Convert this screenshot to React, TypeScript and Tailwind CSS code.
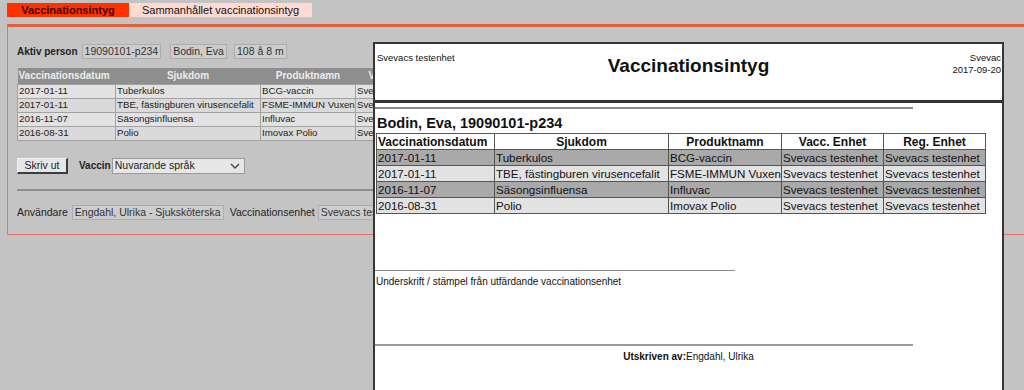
import React from "react";

type Row = { date: string; disease: string; product: string; unit: string };

const rows: Row[] = [
  { date: "2017-01-11", disease: "Tuberkulos", product: "BCG-vaccin", unit: "Svevacs testenhet" },
  { date: "2017-01-11", disease: "TBE, fästingburen virusencefalit", product: "FSME-IMMUN Vuxen", unit: "Svevacs testenhet" },
  { date: "2016-11-07", disease: "Säsongsinfluensa", product: "Influvac", unit: "Svevacs testenhet" },
  { date: "2016-08-31", disease: "Polio", product: "Imovax Polio", unit: "Svevacs testenhet" },
];

const font = { fontFamily: '"Liberation Sans", Arial, sans-serif' };

function InfoBox({ children, className = "" }: { children: React.ReactNode; className?: string }) {
  return (
    <span
      className={`flex h-[15px] shrink-0 items-center border border-[#adadad] bg-[#cdcdcd] px-[2px] text-[10.5px] leading-none text-[#333] whitespace-nowrap ${className}`}
    >
      {children}
    </span>
  );
}

function LeftTable() {
  const td = "overflow-hidden whitespace-nowrap border border-[#a2a2a2] px-[1px] leading-[12px]";
  return (
    <table className="table-fixed border-collapse text-[9.7px] text-[#222]" style={{ width: 438 }}>
      <colgroup>
        <col style={{ width: 98 }} />
        <col style={{ width: 145 }} />
        <col style={{ width: 95 }} />
        <col style={{ width: 100 }} />
      </colgroup>
      <thead>
        <tr className="h-[16px] bg-[#8e8e8e] text-[10px] font-bold text-[#ededed]">
          <th className="px-[1px] text-left leading-[14px]">Vaccinationsdatum</th>
          <th className="text-center leading-[14px]">Sjukdom</th>
          <th className="text-center leading-[14px]">Produktnamn</th>
          <th className="whitespace-nowrap pl-[13px] text-left leading-[14px]">Vacc. Enhet</th>
        </tr>
      </thead>
      <tbody>
        {rows.map((r, i) => (
          <tr key={i} className={`h-[14px] ${i % 2 === 0 ? "bg-[#e2e2e2]" : "bg-[#dadada]"}`}>
            <td className={td}>{r.date}</td>
            <td className={td}>{r.disease}</td>
            <td className={td}>{r.product}</td>
            <td className={td}>{r.unit}</td>
          </tr>
        ))}
      </tbody>
    </table>
  );
}

function CertTable() {
  const td = "overflow-hidden whitespace-nowrap border border-[#555] px-[1px] text-[11.6px] leading-[14px]";
  return (
    <table className="table-fixed border-collapse border border-[#8a8a8a] text-[12px] text-[#111]" style={{ width: 609 }}>
      <colgroup>
        <col style={{ width: 118 }} />
        <col style={{ width: 174 }} />
        <col style={{ width: 113 }} />
        <col style={{ width: 102 }} />
        <col style={{ width: 102 }} />
      </colgroup>
      <thead>
        <tr className="h-[16px] bg-white font-bold">
          <th className="border border-[#555] px-[1px] text-left leading-[14px]">Vaccinationsdatum</th>
          <th className="border border-[#555] text-center leading-[14px]">Sjukdom</th>
          <th className="border border-[#555] text-center leading-[14px]">Produktnamn</th>
          <th className="border border-[#555] text-center leading-[14px]">Vacc. Enhet</th>
          <th className="border border-[#555] text-center leading-[14px]">Reg. Enhet</th>
        </tr>
      </thead>
      <tbody>
        {rows.map((r, i) => (
          <tr key={i} className={`h-[16px] ${i % 2 === 0 ? "bg-[#a9a9a9]" : "bg-[#e2e2e2]"}`}>
            <td className={td}>{r.date}</td>
            <td className={td}>{r.disease}</td>
            <td className={td}>{r.product}</td>
            <td className={td}>{r.unit}</td>
            <td className={td}>{r.unit}</td>
          </tr>
        ))}
      </tbody>
    </table>
  );
}

function CertificatePreview() {
  return (
    <div className="absolute left-[373px] top-[42px] h-[360px] w-[631px] border-2 border-[#363636] bg-white text-[#111]">
      <div className="grid h-[56px] grid-cols-[1fr_auto_1fr]">
        <div className="pl-[2px] pt-[8px] text-[9.5px] leading-[12px]">Svevacs testenhet</div>
        <div className="pt-[11px] text-[19px] font-bold leading-[22px]">Vaccinationsintyg</div>
        <div className="flex flex-col items-end pr-[1px] pt-[8px] text-[9.5px] leading-[12px]">
          <span>Svevac</span>
          <span>2017-09-20</span>
        </div>
      </div>
      <div className="h-[3px] bg-[#333]" />
      <div className="mt-[4px] h-[2px] w-[538px] bg-[#8a8a8a]" />
      <div className="mt-[6px] pl-[2px] text-[14.5px] font-bold leading-[16px]">Bodin, Eva, 19090101-p234</div>
      <div className="mt-[2px] pl-[1px]">
        <CertTable />
      </div>
      <div className="mt-[56px] h-[1px] w-[360px] bg-[#8a8a8a]" />
      <div className="mt-[5px] pl-[1px] text-[10px] leading-[12px]">Underskrift / stämpel från utfärdande vaccinationsenhet</div>
      <div className="mt-[56px] h-[2px] w-[538px] bg-[#9a9a9a]" />
      <div className="mt-[5px] text-center text-[10px] leading-[12px]">
        <span className="font-bold">Utskriven av:</span>Engdahl, Ulrika
      </div>
    </div>
  );
}

export default function App() {
  return (
    <div className="relative h-[390px] w-[1024px] overflow-hidden bg-[#c3c3c3] text-[10px] leading-none" style={font}>
      <div className="flex pl-[7px] pt-[3px]">
        <div className="flex h-[14px] w-[122px] items-center justify-center bg-[#ff3300] text-[11px] font-bold text-[#3b0500]">
          Vaccinationsintyg
        </div>
        <div className="flex h-[14px] w-[183px] items-center justify-center bg-[#ffdad2] text-[11px] text-[#111]">
          Sammanhållet vaccinationsintyg
        </div>
      </div>

      <div className="ml-[7px] mt-[7px] h-[211px] w-[1040px] border-b border-l border-t-[3px] border-b-[#df7468] border-l-[#df7468] border-t-[#e0603e] bg-[#c4c4c4] pl-[9px] pt-[17px]">
        <div className="w-[357px] overflow-hidden">
          <div className="flex h-[15px] items-center">
            <span className="text-[10px] font-bold text-[#222]">Aktiv person</span>
            <InfoBox className="ml-[4px]">19090101-p234</InfoBox>
            <InfoBox className="ml-[9px]">Bodin, Eva</InfoBox>
            <InfoBox className="ml-[7px]">108 å 8 m</InfoBox>
          </div>

          <div className="mt-[9px]">
            <LeftTable />
          </div>

          <div className="mt-[17px] flex h-[16px] items-center">
            <button className="flex h-[16px] w-[51px] items-center justify-center border border-b-2 border-r-2 border-b-[#3c3c3c] border-l-[#f2f2f2] border-r-[#3c3c3c] border-t-[#f2f2f2] bg-[#e6e6e6] text-[10.5px] text-[#222]">
              Skriv ut
            </button>
            <span className="ml-[11px] text-[10px] font-bold text-[#222]">Vaccin</span>
            <div className="ml-[1px] flex h-[16px] w-[133px] items-center justify-between border border-[#9a9a9a] bg-[#e6e6e6] pl-[2px] pr-[4px] text-[10.5px] text-[#222]">
              <span>Nuvarande språk</span>
              <svg width="10" height="6" viewBox="0 0 10 6" fill="none" stroke="#444" strokeWidth="1.3">
                <path d="M1 1l4 4 4-4" />
              </svg>
            </div>
          </div>

          <div className="mt-[15px] h-[2px] w-full bg-[#8e8e8e]" />

          <div className="mt-[14px] flex h-[15px] items-center">
            <span className="shrink-0 text-[10.5px] text-[#222]">Användare</span>
            <InfoBox className="ml-[4px]">Engdahl, Ulrika - Sjuksköterska</InfoBox>
            <span className="ml-[6px] shrink-0 text-[10.5px] text-[#222]">Vaccinationsenhet</span>
            <InfoBox className="ml-[3px]">Svevacs testenhet</InfoBox>
          </div>
        </div>
      </div>

      <CertificatePreview />
    </div>
  );
}
